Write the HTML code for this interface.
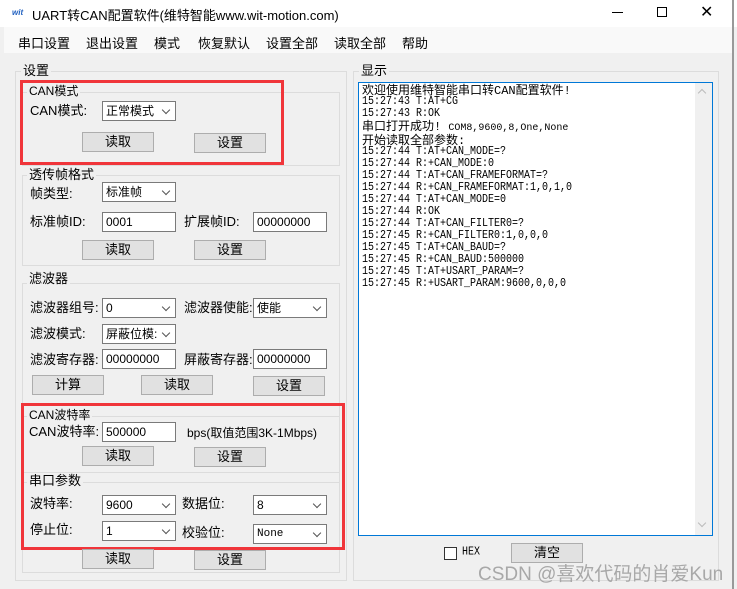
<!DOCTYPE html><html><head><meta charset="utf-8"><style>
*{margin:0;padding:0;box-sizing:border-box}
body{width:737px;height:589px;background:#f0f0f0;font-family:"Liberation Sans","Noto Sans CJK SC",sans-serif;font-size:12px;color:#000;position:relative;overflow:hidden}
.a{position:absolute;white-space:nowrap}
.gb{position:absolute;border:1px solid #dcdcdc}
.gl{position:absolute;background:#f0f0f0;padding:0 2px;line-height:14px;font-size:12px}
.in{position:absolute;background:#fff;border:1px solid #7a7a7a;height:20px;line-height:18px;padding-left:3px;font-size:12px}
.cb:after{content:"";position:absolute;right:6px;top:5px;width:5px;height:5px;border-right:1px solid #555;border-bottom:1px solid #555;transform:rotate(45deg)}
.bt{position:absolute;background:#e1e1e1;border:1px solid #adadad;height:20px;width:72px;text-align:center;line-height:18px;font-size:13px}
.lb{position:absolute;font-size:13px;line-height:14px;white-space:nowrap}
.red{position:absolute;border:3px solid #f0353a}
.log{font-family:"Liberation Mono","Noto Sans CJK SC",monospace;font-size:10px;line-height:12px}
.log div{transform:scaleY(1.2);transform-origin:left center}
</style></head><body>
<div class="a" style="left:0;top:0;width:737px;height:27px;background:#fff"></div>
<div class="a" style="left:12px;top:8px;font-size:8px;color:#2060c0;font-style:italic;font-weight:bold">wit</div>
<div class="a" style="left:32px;top:5px;font-size:13px">UART转CAN配置软件(维特智能www.wit-motion.com)</div>
<div class="a" style="left:612px;top:12px;width:11px;height:1px;background:#000"></div>
<div class="a" style="left:657px;top:7px;width:10px;height:10px;border:1px solid #000"></div>
<div class="a" style="left:700px;top:2px;font-size:16px">✕</div>
<div class="a" style="left:732px;top:0;width:2px;height:589px;background:#999"></div>
<div class="a" style="left:4px;top:27px;width:728px;height:26px;background:#f9f9f9"></div>
<div class="a" style="left:18px;top:33px;font-size:13px;word-spacing:0">串口设置</div>
<div class="a" style="left:86px;top:33px;font-size:13px">退出设置</div>
<div class="a" style="left:154px;top:33px;font-size:13px">模式</div>
<div class="a" style="left:198px;top:33px;font-size:13px">恢复默认</div>
<div class="a" style="left:266px;top:33px;font-size:13px">设置全部</div>
<div class="a" style="left:334px;top:33px;font-size:13px">读取全部</div>
<div class="a" style="left:402px;top:33px;font-size:13px">帮助</div>

<div class="gb" style="left:15px;top:71px;width:332px;height:510px"></div>
<div class="gl" style="left:21px;top:64px;font-size:13px">设置</div>

<div class="gb" style="left:22px;top:92px;width:318px;height:74px"></div>
<div class="gl" style="left:27px;top:84px">CAN模式</div>
<div class="lb" style="left:30px;top:104px">CAN模式:</div>
<div class="in cb" style="left:102px;top:101px;width:74px">正常模式</div>
<div class="bt" style="left:82px;top:132px">读取</div>
<div class="bt" style="left:194px;top:133px">设置</div>
<div class="red" style="left:20px;top:80px;width:264px;height:85px"></div>

<div class="gb" style="left:22px;top:175px;width:318px;height:91px"></div>
<div class="gl" style="left:27px;top:168px;font-size:13px">透传帧格式</div>
<div class="lb" style="left:30px;top:187px">帧类型:</div>
<div class="in cb" style="left:102px;top:182px;width:74px">标准帧</div>
<div class="lb" style="left:30px;top:215px">标准帧ID:</div>
<div class="in" style="left:102px;top:212px;width:74px">0001</div>
<div class="lb" style="left:184px;top:215px">扩展帧ID:</div>
<div class="in" style="left:253px;top:212px;width:74px">00000000</div>
<div class="bt" style="left:82px;top:240px">读取</div>
<div class="bt" style="left:194px;top:240px">设置</div>

<div class="gb" style="left:22px;top:283px;width:318px;height:290px"></div>
<div class="gl" style="left:27px;top:272px;font-size:13px">滤波器</div>
<div class="lb" style="left:30px;top:301px">滤波器组号:</div>
<div class="in cb" style="left:102px;top:298px;width:74px">0</div>
<div class="lb" style="left:184px;top:301px">滤波器使能:</div>
<div class="in cb" style="left:253px;top:298px;width:74px">使能</div>
<div class="lb" style="left:30px;top:327px">滤波模式:</div>
<div class="in cb" style="left:102px;top:324px;width:74px;overflow:hidden">屏蔽位模:</div>
<div class="lb" style="left:30px;top:353px">滤波寄存器:</div>
<div class="in" style="left:102px;top:349px;width:74px">00000000</div>
<div class="lb" style="left:184px;top:353px">屏蔽寄存器:</div>
<div class="in" style="left:253px;top:349px;width:74px">00000000</div>
<div class="bt" style="left:32px;top:375px">计算</div>
<div class="bt" style="left:141px;top:375px">读取</div>
<div class="bt" style="left:253px;top:376px">设置</div>

<div class="gb" style="left:22px;top:416px;width:318px;height:57px"></div>
<div class="gl" style="left:27px;top:408px">CAN波特率</div>
<div class="lb" style="left:29px;top:425px">CAN波特率:</div>
<div class="in" style="left:102px;top:422px;width:74px">500000</div>
<div class="lb" style="left:187px;top:426px;font-size:12px">bps(取值范围3K-1Mbps)</div>
<div class="bt" style="left:82px;top:446px">读取</div>
<div class="bt" style="left:194px;top:447px">设置</div>

<div class="gb" style="left:22px;top:482px;width:318px;height:91px"></div>
<div class="gl" style="left:27px;top:474px;font-size:13px">串口参数</div>
<div class="lb" style="left:30px;top:497px">波特率:</div>
<div class="in cb" style="left:102px;top:495px;width:74px">9600</div>
<div class="lb" style="left:182px;top:497px">数据位:</div>
<div class="in cb" style="left:253px;top:495px;width:74px">8</div>
<div class="lb" style="left:30px;top:523px">停止位:</div>
<div class="in cb" style="left:102px;top:521px;width:74px">1</div>
<div class="lb" style="left:182px;top:526px">校验位:</div>
<div class="in cb" style="left:253px;top:524px;width:74px;font-family:'Liberation Mono',monospace;font-size:11px">None</div>
<div class="red" style="left:21px;top:403px;width:324px;height:147px"></div>
<div class="bt" style="left:82px;top:549px">读取</div>
<div class="bt" style="left:194px;top:550px">设置</div>

<div class="gb" style="left:353px;top:71px;width:366px;height:510px"></div>
<div class="gl" style="left:359px;top:64px;font-size:13px">显示</div>
<div class="a" style="left:358px;top:82px;width:355px;height:454px;background:#fff;border:1px solid #0078d7"></div>
<div class="a" style="left:695px;top:83px;width:17px;height:452px;background:#f0f0f0"></div>
<div class="a" style="left:699px;top:90px;width:6px;height:6px;border-left:1px solid #bbb;border-top:1px solid #bbb;transform:rotate(45deg)"></div>
<div class="a" style="left:699px;top:520px;width:6px;height:6px;border-right:1px solid #bbb;border-bottom:1px solid #bbb;transform:rotate(45deg)"></div>
<div class="a log" style="left:362px;top:85px">
<div style="font-size:12px;line-height:12px;transform:none">欢迎使用维特智能串口转CAN配置软件!</div>
<div>15:27:43 T:AT+CG</div><div>15:27:43 R:OK</div>
<div style="font-size:12px;transform:none">串口打开成功! <span style="font-size:10px">COM8,9600,8,One,None</span></div>
<div style="font-size:12px;transform:none">开始读取全部参数:</div>
<div>15:27:44 T:AT+CAN_MODE=?</div><div>15:27:44 R:+CAN_MODE:0</div>
<div>15:27:44 T:AT+CAN_FRAMEFORMAT=?</div><div>15:27:44 R:+CAN_FRAMEFORMAT:1,0,1,0</div>
<div>15:27:44 T:AT+CAN_MODE=0</div><div>15:27:44 R:OK</div>
<div>15:27:44 T:AT+CAN_FILTER0=?</div><div>15:27:45 R:+CAN_FILTER0:1,0,0,0</div>
<div>15:27:45 T:AT+CAN_BAUD=?</div><div>15:27:45 R:+CAN_BAUD:500000</div>
<div>15:27:45 T:AT+USART_PARAM=?</div><div>15:27:45 R:+USART_PARAM:9600,0,0,0</div>
</div>
<div class="a" style="left:444px;top:547px;width:13px;height:13px;border:1px solid #333;background:#fff"></div>
<div class="a" style="left:462px;top:547px;font-family:'Liberation Mono',monospace;font-size:10px;transform:scaleY(1.2)">HEX</div>
<div class="bt" style="left:511px;top:543px">清空</div>
<div class="a" style="left:478px;top:559px;font-size:19px;color:#a8a8a8">CSDN @喜欢代码的肖爱Kun</div>
</body></html>
